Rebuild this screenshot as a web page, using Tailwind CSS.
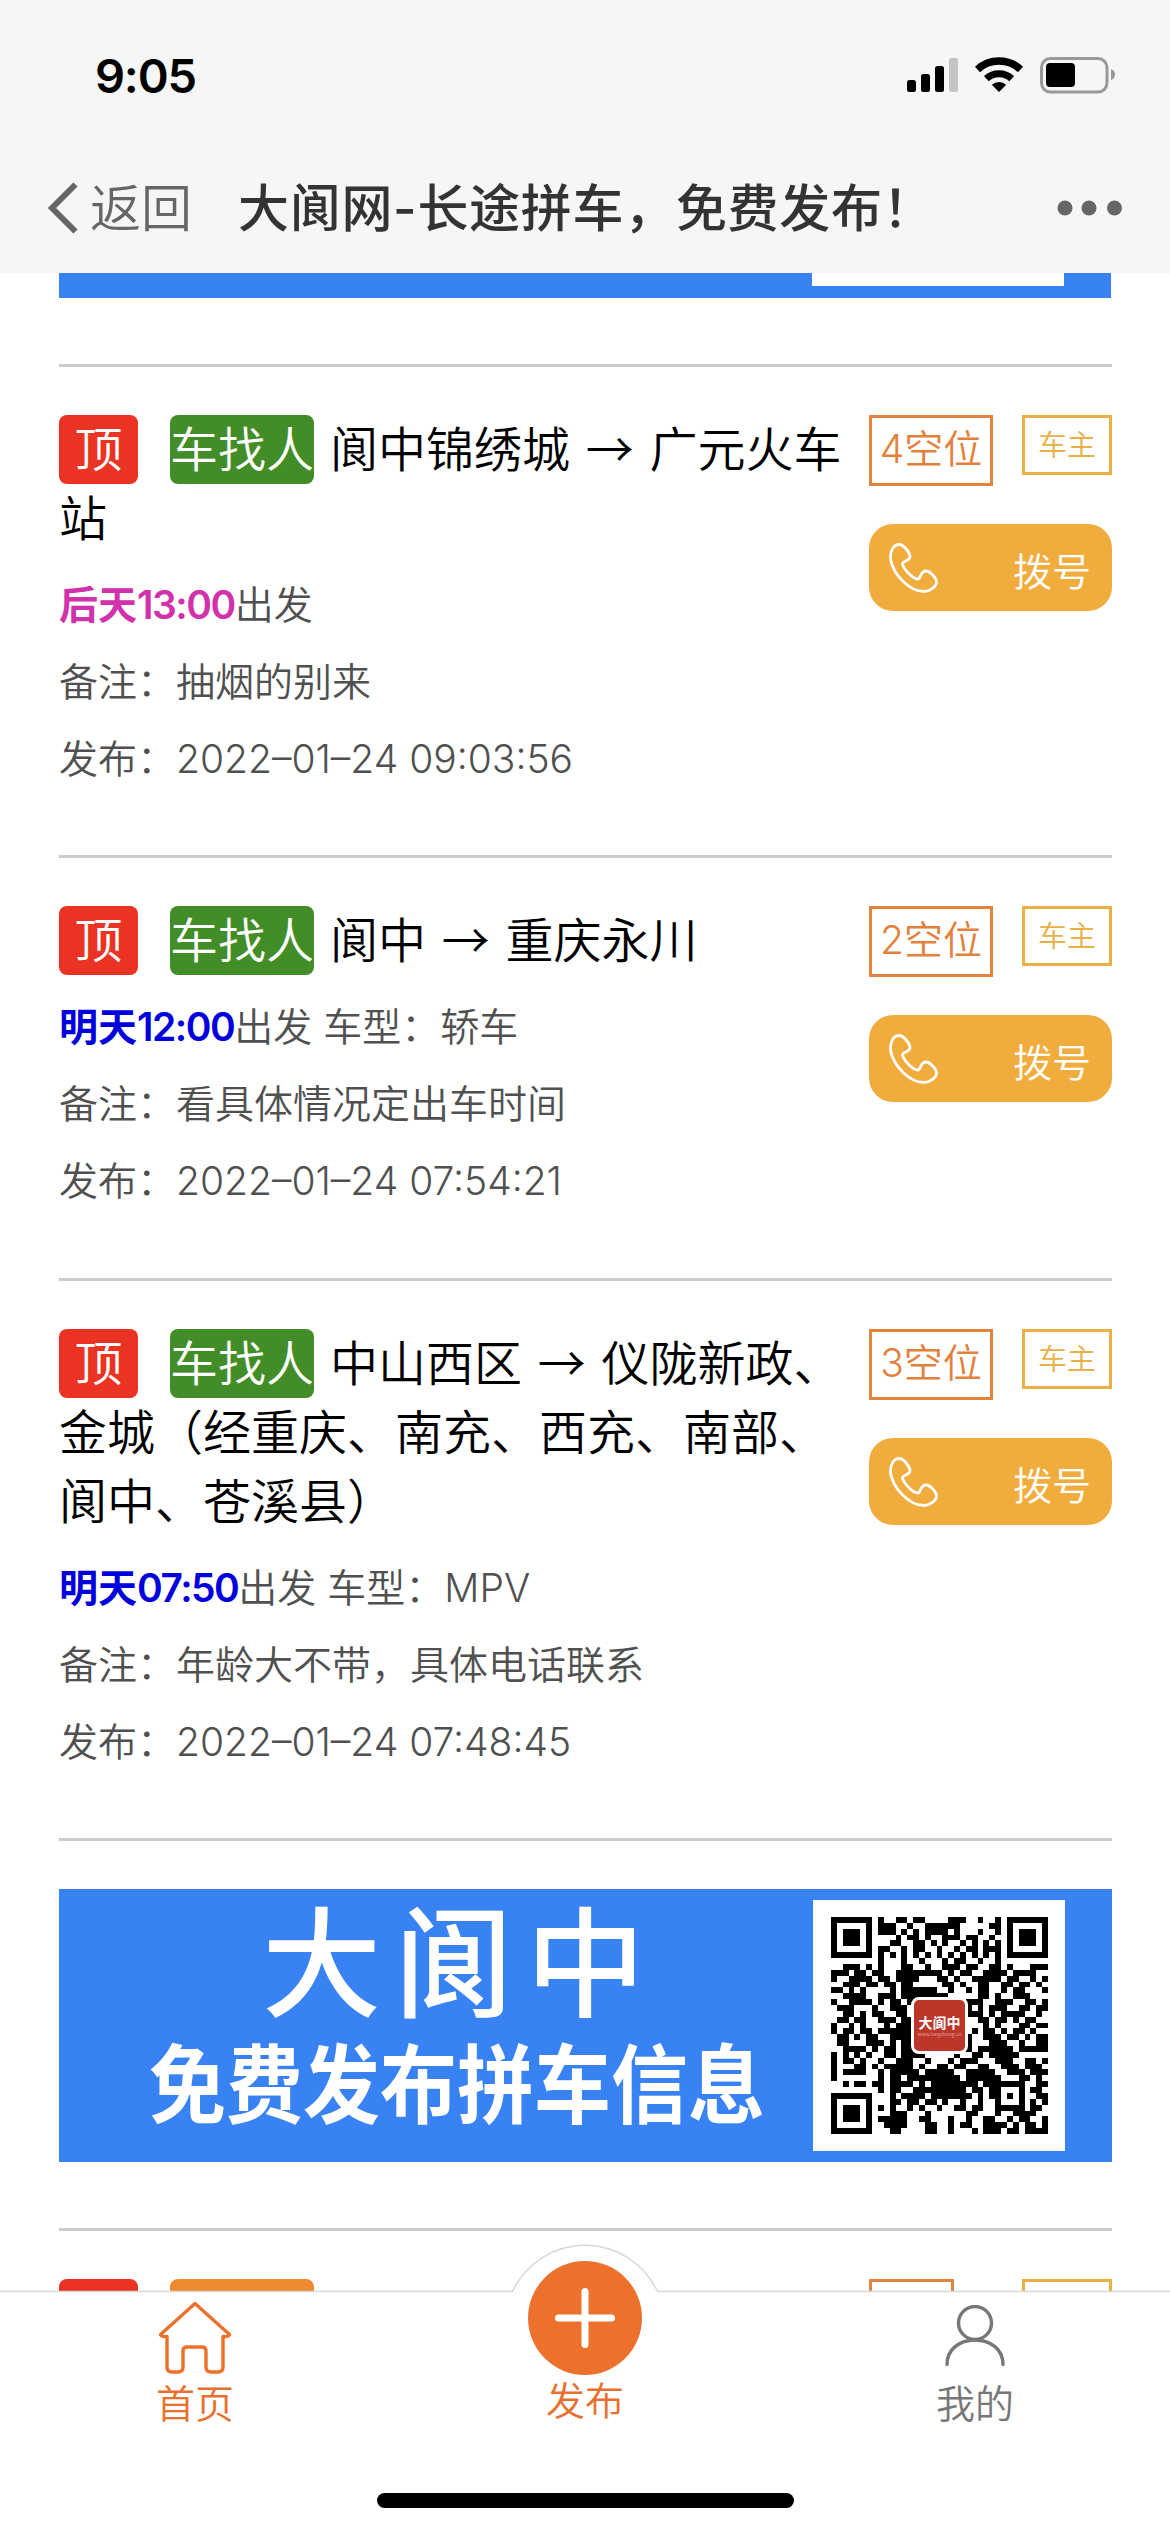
<!DOCTYPE html>
<html lang="zh-CN">
<head>
<meta charset="utf-8">
<title>大阆网-长途拼车，免费发布！</title>
<script src="https://cdn.jsdelivr.net/npm/@tailwindcss/browser@4"></script>
</head>
<body class="bg-white">
<div class="relative flex h-[2532px] w-[1170px] flex-col overflow-hidden bg-white font-['Inter','Noto_Sans_CJK_SC',sans-serif] font-[350]">

  <header class="h-[273px] shrink-0 bg-[#f6f6f6]">
    <div class="flex h-[150px] items-center justify-between pr-[55px] pl-[95px]">
      <span class="text-[47px] leading-none font-semibold tracking-[-1.2px] text-black">9:05</span>
      <svg class="h-[38px] w-[209px]" viewBox="906 55 209 38" fill="none">
        <rect x="907" y="79" width="9" height="12" rx="2.5" fill="#000"/>
        <rect x="921" y="73" width="9" height="18" rx="2.5" fill="#000"/>
        <rect x="935" y="65" width="9" height="26" rx="2.5" fill="#000"/>
        <rect x="949" y="57" width="9" height="34" rx="2.5" fill="#c4c4c4"/>
        <path d="M977.5 68.500a31.500 31.500 0 0 1 43 0" stroke="#000" stroke-width="7.500"/>
        <path d="M986.3 77.600a19 19 0 0 1 25.400 0" stroke="#000" stroke-width="7"/>
        <path d="M999 91l-7.200-7.200a10.600 10.600 0 0 1 14.400 0z" fill="#000"/>
        <rect x="1041.500" y="57.500" width="65.500" height="33.500" rx="9" stroke="#999" stroke-width="3"/>
        <rect x="1046" y="62" width="29" height="24" rx="4" fill="#000"/>
        <path d="M1111 68q4 1.500 4 5.500t-4 5.500z" fill="#999"/>
      </svg>
    </div>
    <div class="flex h-[116px] items-center pr-[47px] pl-[47px]">
      <svg class="h-[52px] w-[32px] shrink-0" viewBox="0 0 32 52" fill="none"><path d="M28.500 2.500L5 26l23.500 23.500" stroke="#666" stroke-width="6"/></svg>
      <span class="ml-[11px] text-[51px] leading-none text-[#666]">返回</span>
      <h1 class="ml-[46px] flex-1 text-[51px] leading-none font-medium tracking-[0.700px] whitespace-nowrap text-[#333]">大阆网-长途拼车，免费发布！</h1>
      <svg class="h-[16px] w-[66px] shrink-0" viewBox="0 0 66 16" fill="#666"><circle cx="8" cy="8" r="7.500"/><circle cx="32" cy="8" r="7.500"/><circle cx="57.500" cy="8" r="7.500"/></svg>
    </div>
  </header>

  <main class="flex flex-1 flex-col overflow-hidden px-[59px]">
    <div class="mb-[66px] flex h-[25px] shrink-0 justify-end bg-[#3982f4] pr-[47px]"><div class="h-[13px] w-[252px] bg-white"></div></div>

    <article class="flex h-[491px] w-[1053px] shrink-0 justify-between border-t-[3px] border-[#ccc] pt-[48px]">
      <div class="text-[39px] leading-[77px] whitespace-nowrap text-[#505050]">
        <h2 class="-mt-[3px] mb-[16px] font-['Noto_Sans_CJK_SC',sans-serif] text-[48px] leading-[69px] font-[350] text-black [word-spacing:5px]"><span class="mt-[3px] mr-[32px] mb-[-3px] inline-block h-[69px] rounded-[8px] bg-[#ea3323] px-[15.5px] align-top leading-[63px] text-white">顶</span><span class="mt-[3px] mr-[16px] mb-[-3px] inline-block h-[69px] rounded-[8px] bg-[#438d28] align-top leading-[63px] text-white">车找人</span>阆中锦绣城 → 广元火车<br>站</h2>
        <p><b class="font-semibold text-[#d132ac]">后天<span class="tracking-[-1.5px]">13:00</span></b>出发</p>
        <p>备注：抽烟的别来</p>
        <p>发布：2022–01–24 09:03:56</p>
      </div>
      <div class="flex w-[243px] shrink-0 flex-wrap content-start items-start justify-between">
        <span class="h-[71px] w-[124px] border-[3px] border-[#e2833f] text-center text-[39px] leading-[62px] text-[#e2803c]">4空位</span>
        <span class="h-[60px] w-[90px] border-[3px] border-[#e9b045] text-center text-[29px] leading-[56px] text-[#e9b045]">车主</span>
        <a class="mt-[38px] flex h-[87px] w-full items-center justify-between rounded-[24px] bg-[#f0ad3e] pr-[21px] pl-[20px] text-[39px] leading-none text-white">
          <svg class="h-[50px] w-[49px]" viewBox="0 0 49 50" fill="none" stroke="#fff" stroke-width="2.800"><path d="M1.500 16C1 7 5 1.500 10 1.500C15 1.500 21 10 21 14C21 18 13 18 13.500 21C15 27 24 36 29 36C32 36 31 28 37 28C41 28 47.500 35 47.500 39C47.500 44 40 48.500 35 48.500C20 48.500 4 31 1.500 16Z"/></svg>
          <span class="mt-[8px]">拨号</span>
        </a>
      </div>
    </article>

    <article class="flex h-[423px] w-[1053px] shrink-0 justify-between border-t-[3px] border-[#ccc] pt-[48px]">
      <div class="text-[39px] leading-[77px] whitespace-nowrap text-[#505050]">
        <h2 class="-mt-[3px] mb-[16px] font-['Noto_Sans_CJK_SC',sans-serif] text-[48px] leading-[69px] font-[350] text-black [word-spacing:5px]"><span class="mt-[3px] mr-[32px] mb-[-3px] inline-block h-[69px] rounded-[8px] bg-[#ea3323] px-[15.5px] align-top leading-[63px] text-white">顶</span><span class="mt-[3px] mr-[16px] mb-[-3px] inline-block h-[69px] rounded-[8px] bg-[#438d28] align-top leading-[63px] text-white">车找人</span>阆中 → 重庆永川</h2>
        <p><b class="font-semibold text-[#0000dc]">明天<span class="tracking-[-1.5px]">12:00</span></b>出发 车型：轿车</p>
        <p>备注：看具体情况定出车时间</p>
        <p>发布：2022–01–24 07:54:21</p>
      </div>
      <div class="flex w-[243px] shrink-0 flex-wrap content-start items-start justify-between">
        <span class="h-[71px] w-[124px] border-[3px] border-[#e2833f] text-center text-[39px] leading-[62px] text-[#e2803c]">2空位</span>
        <span class="h-[60px] w-[90px] border-[3px] border-[#e9b045] text-center text-[29px] leading-[56px] text-[#e9b045]">车主</span>
        <a class="mt-[38px] flex h-[87px] w-full items-center justify-between rounded-[24px] bg-[#f0ad3e] pr-[21px] pl-[20px] text-[39px] leading-none text-white">
          <svg class="h-[50px] w-[49px]" viewBox="0 0 49 50" fill="none" stroke="#fff" stroke-width="2.800"><path d="M1.500 16C1 7 5 1.500 10 1.500C15 1.500 21 10 21 14C21 18 13 18 13.500 21C15 27 24 36 29 36C32 36 31 28 37 28C41 28 47.500 35 47.500 39C47.500 44 40 48.500 35 48.500C20 48.500 4 31 1.500 16Z"/></svg>
          <span class="mt-[8px]">拨号</span>
        </a>
      </div>
    </article>

    <article class="flex h-[560px] w-[1053px] shrink-0 justify-between border-t-[3px] border-[#ccc] pt-[48px]">
      <div class="text-[39px] leading-[77px] whitespace-nowrap text-[#505050]">
        <h2 class="-mt-[3px] mb-[16px] font-['Noto_Sans_CJK_SC',sans-serif] text-[48px] leading-[69px] font-[350] text-black [word-spacing:5px]"><span class="mt-[3px] mr-[32px] mb-[-3px] inline-block h-[69px] rounded-[8px] bg-[#ea3323] px-[15.5px] align-top leading-[63px] text-white">顶</span><span class="mt-[3px] mr-[16px] mb-[-3px] inline-block h-[69px] rounded-[8px] bg-[#438d28] align-top leading-[63px] text-white">车找人</span>中山西区 → 仪陇新政、<br>金城（经重庆、南充、西充、南部、<br>阆中、苍溪县）</h2>
        <p><b class="font-semibold text-[#0000dc]">明天<span class="tracking-[-1.5px]">07:50</span></b>出发 车型：MPV</p>
        <p>备注：年龄大不带，具体电话联系</p>
        <p>发布：2022–01–24 07:48:45</p>
      </div>
      <div class="flex w-[243px] shrink-0 flex-wrap content-start items-start justify-between">
        <span class="h-[71px] w-[124px] border-[3px] border-[#e2833f] text-center text-[39px] leading-[62px] text-[#e2803c]">3空位</span>
        <span class="h-[60px] w-[90px] border-[3px] border-[#e9b045] text-center text-[29px] leading-[56px] text-[#e9b045]">车主</span>
        <a class="mt-[38px] flex h-[87px] w-full items-center justify-between rounded-[24px] bg-[#f0ad3e] pr-[21px] pl-[20px] text-[39px] leading-none text-white">
          <svg class="h-[50px] w-[49px]" viewBox="0 0 49 50" fill="none" stroke="#fff" stroke-width="2.800"><path d="M1.500 16C1 7 5 1.500 10 1.500C15 1.500 21 10 21 14C21 18 13 18 13.500 21C15 27 24 36 29 36C32 36 31 28 37 28C41 28 47.500 35 47.500 39C47.500 44 40 48.500 35 48.500C20 48.500 4 31 1.500 16Z"/></svg>
          <span class="mt-[8px]">拨号</span>
        </a>
      </div>
    </article>

    <section class="h-[390px] w-[1053px] shrink-0 border-t-[3px] border-[#ccc] pt-[48px]">
      <div class="flex h-[273px] items-center justify-between bg-[#3982f4] pr-[47px] pl-[90px] font-['Noto_Sans_CJK_SC',sans-serif] text-white">
        <div class="flex h-full w-[616px] flex-col items-center whitespace-nowrap">
          <div class="mt-[5px] ml-[6px] text-[119px] leading-[124px] font-medium tracking-[13px]">大阆中</div>
          <div class="mt-[12px] scale-y-[1.12] text-[77px] leading-[100px] font-bold">免费发布拼车信息</div>
        </div>
        <div class="relative flex h-[251px] w-[252px] items-center justify-center bg-white">
          <svg id="qr" class="h-[217px] w-[217px]" viewBox="0 0 37 37" shape-rendering="crispEdges"><path fill="#000"/></svg>
          <div class="absolute top-[97px] left-[98px] flex h-[57px] w-[57px] flex-col items-center justify-center rounded-[8px] border-[3px] border-white bg-[#bb3529]">
            <span class="text-[14px] leading-[16px] font-bold">大阆中</span>
            <span class="text-[5px] leading-[8px] text-[#e9b0aa]">www.langzhong.cn</span>
          </div>
        </div>
      </div>
    </section>

    <article class="flex h-[200px] w-[1053px] shrink-0 items-start border-t-[3px] border-[#ccc] pt-[48px]">
      <span class="mr-[32px] h-[69px] w-[79px] rounded-[8px] bg-[#ea3323]"></span>
      <span class="h-[69px] w-[144px] rounded-[8px] bg-[#f08a30]"></span>
      <span class="ml-auto h-[71px] w-[85px] border-[3px] border-[#e2833f]"></span>
      <span class="ml-[68px] h-[60px] w-[90px] border-[3px] border-[#e9b045]"></span>
    </article>
  </main>

  <nav class="absolute inset-x-0 bottom-0 h-[288px]">
    <svg class="absolute inset-0 h-[288px] w-[1170px]" viewBox="0 0 1170 288" fill="none">
      <path d="M-2 47.500H512.500A80 80 0 0 1 657.500 47.500H1172V290H-2Z" fill="#fff" stroke="#d8d8d8" stroke-width="1.500"/>
    </svg>
    <div class="relative grid h-full grid-cols-3 text-[39px] leading-[50px]">
      <a class="flex flex-col items-center pt-[57px] text-[#e8702e]">
        <svg class="h-[73px] w-[74px]" viewBox="0 0 74 73" fill="none" stroke="#ec712c" stroke-width="3.400" stroke-linejoin="round"><path d="M37 2.500L2.500 33.500Q3 36 9 35.500V66Q9 71 14 71H20Q25 71 25 66V50Q25 46 29 46H44Q48 46 48 50V66Q48 71 53 71H60Q65 71 65 66V35.500Q71 36 71.500 33.500Z"/></svg>
        <span class="mt-[5px]">首页</span>
      </a>
      <a class="flex flex-col items-center pt-[17px] text-[#e8702e]">
        <svg class="h-[114px] w-[114px]" viewBox="0 0 114 114"><circle cx="57" cy="57" r="57" fill="#ec712c"/><path d="M57 30.500V83.500M30.500 57H83.500" stroke="#fff" stroke-width="7" stroke-linecap="round"/></svg>
        <span class="mt-[1px]">发布</span>
      </a>
      <a class="flex flex-col items-center pt-[61px] text-[#777]">
        <svg class="h-[62px] w-[62px]" viewBox="0 0 62 62" fill="none" stroke="#777" stroke-width="3.400" stroke-linecap="round"><circle cx="31" cy="18" r="16.500"/><path d="M3 59.500C3 44 16 35 31 35S59 44 59 59.500"/></svg>
        <span class="mt-[12px]">我的</span>
      </a>
    </div>
    <div class="absolute bottom-[24px] left-[377px] h-[15px] w-[417px] rounded-full bg-black"></div>
  </nav>
</div>

<script>
const rows = `1111111010011011000011100100101111111
1000001011100100111111000001101000001
1011101011101010111101000100101011101
1011101000010110100111011001001011101
1011101000110011010100101010101011101
1000001011001011001001011011101000001
1111111010101010101010101010101111111
0000000010001001000101100100100000000
0011101010001100100111011001101000111
1110110110011111111010110011110111100
1001111011011110001101001111101100101
0011101101101100000110100110011011010
1101010000101111110010010110010110001
0011110011101111111100000110100111000
1001111010110100000000011100111001101
0111000100111000000000010101110011011
0011010110011000000000011101011110010
0110110011101100000000000110110101100
1001010001011100000000000010100011011
1011011011111100000000001011010110100
0110101100111100000000010011101101011
0110001110101100000000010001110010011
0011110101101100000000010111111011111
1010101001101111000001001101111100000
1011010010011100100010111000111001101
1000110101111101001101100110011101110
1011110010111110111110011111001110111
1000000010110111111111011111100011010
0010110110111101011111111011111110011
0000000010110011111111101101100010110
1111111000101111011111110101101010011
1000001000110110110100100100100010101
1011101010100101001001101100111110110
1011101000111000100000011000100111100
1011101011111001100010010011001011001
1000001001111000110010110011110101101
1111111000110000110010001011101101111`.split("\n");
let d = "";
rows.forEach((r, y) => [...r].forEach((c, x) => { if (c === "1") d += `M${x} ${y}h1v1h-1z`; }));
document.querySelector("#qr path").setAttribute("d", d);
</script>
</body>
</html>
